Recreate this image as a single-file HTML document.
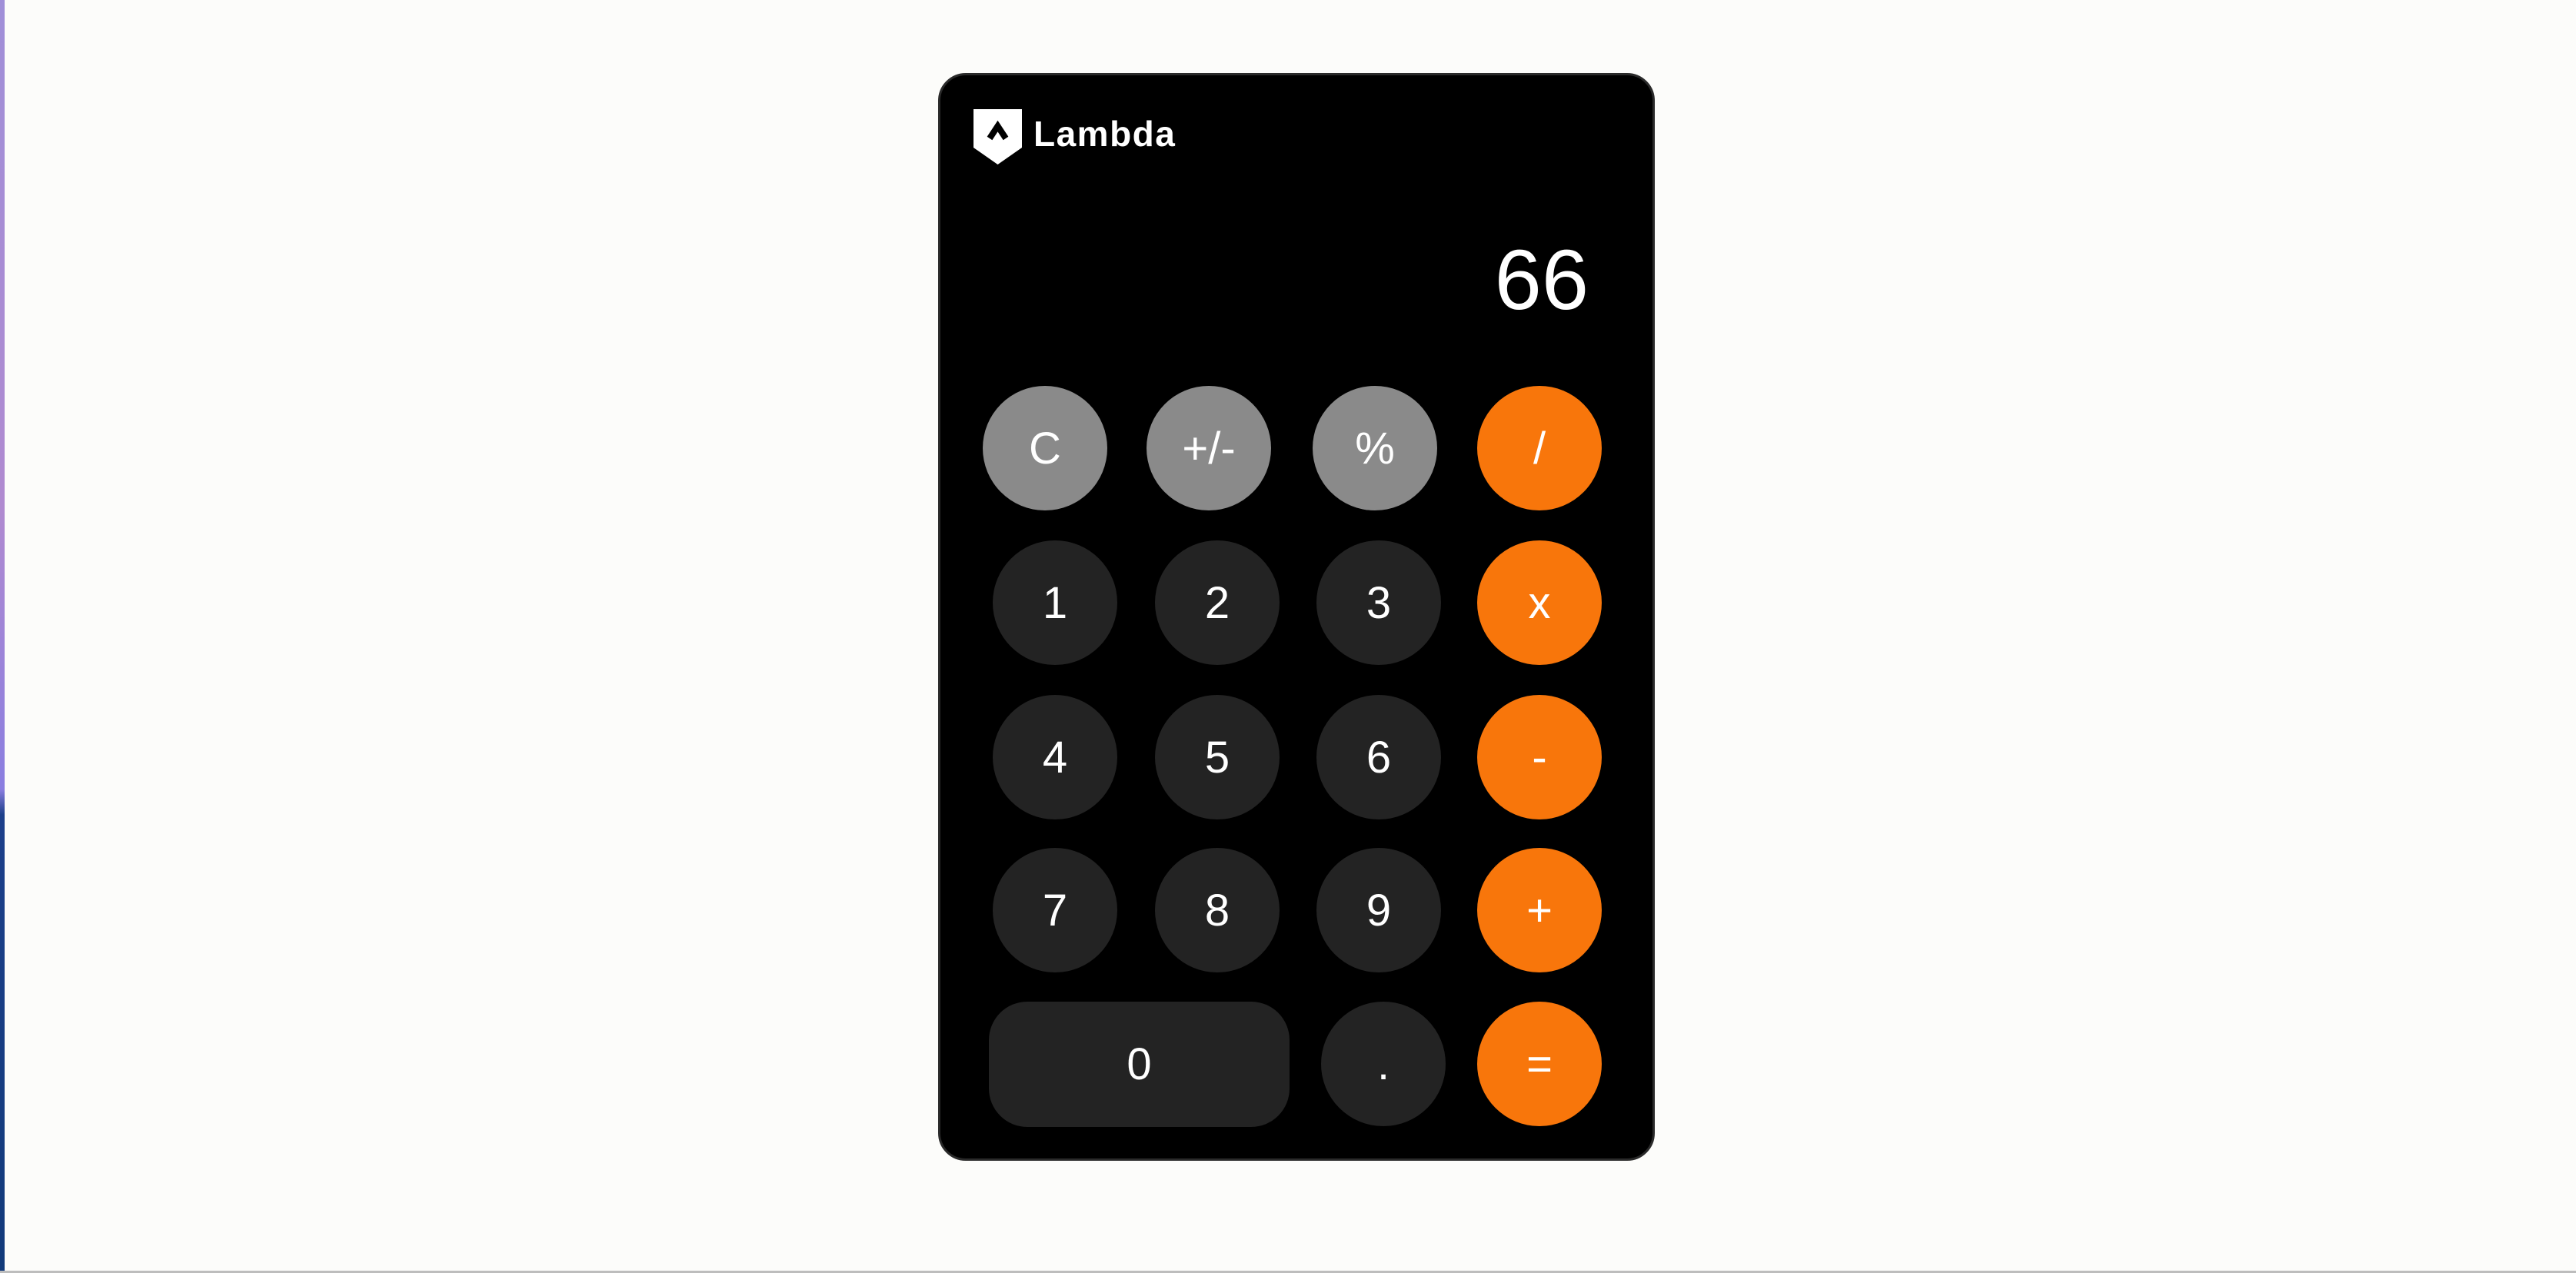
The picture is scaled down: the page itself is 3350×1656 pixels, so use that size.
<!DOCTYPE html>
<html><head><style>
html,body{margin:0;padding:0}
body{width:3350px;height:1656px;background:#fcfcfa;position:relative;overflow:hidden;font-family:"Liberation Sans",Arial,sans-serif}
.strip{position:absolute;left:0;top:0;width:6px;height:1656px;background:linear-gradient(#a08fd8 0,#b08ad0 40%,#8a7ee0 62%,#1c3f8a 64%,#123a7a 100%)}
.bot{position:absolute;left:0;bottom:0;width:3350px;height:3px;background:#bdbdbd}
.card{position:absolute;left:1220px;top:95px;width:926px;height:1409px;background:#000;border:3px solid #2a2a2a;border-radius:36px}
.b{position:absolute;width:162px;height:162px;border-radius:50%;background:#232323;color:#fff;font-size:58px;display:flex;align-items:center;justify-content:center}
.g{background:#8a8a8a}
.o{background:#f8760b}
</style></head><body>
<div class="strip"></div>
<div class="bot"></div>
<div class="card"></div>
<svg style="position:absolute;left:1266px;top:142px" width="64" height="72" viewBox="0 0 64 72"><path d="M0 0H63V50L31.5 72L0 50Z" fill="#fff"/><path d="M21 38L31.5 22L42 38" stroke="#000" stroke-width="8" fill="none"/></svg>
<div style="position:absolute;left:1344px;top:144px;font-size:46px;font-weight:bold;color:#fff;line-height:60px;letter-spacing:1.5px">Lambda</div>
<div style="position:absolute;right:1284px;top:305px;font-size:110px;color:#fff;line-height:120px">66</div>

<div class="b g" style="left:1278px;top:502px">C</div>
<div class="b g" style="left:1491px;top:502px">+/-</div>
<div class="b g" style="left:1707px;top:502px">%</div>
<div class="b o" style="left:1921px;top:502px">/</div>

<div class="b" style="left:1291px;top:703px">1</div>
<div class="b" style="left:1502px;top:703px">2</div>
<div class="b" style="left:1712px;top:703px">3</div>
<div class="b o" style="left:1921px;top:703px">x</div>

<div class="b" style="left:1291px;top:904px">4</div>
<div class="b" style="left:1502px;top:904px">5</div>
<div class="b" style="left:1712px;top:904px">6</div>
<div class="b o" style="left:1921px;top:904px">-</div>

<div class="b" style="left:1291px;top:1103px">7</div>
<div class="b" style="left:1502px;top:1103px">8</div>
<div class="b" style="left:1712px;top:1103px">9</div>
<div class="b o" style="left:1921px;top:1103px">+</div>

<div class="b" style="left:1286px;top:1303px;width:391px;height:163px;border-radius:50px">0</div>
<div class="b" style="left:1718px;top:1303px">.</div>
<div class="b o" style="left:1921px;top:1303px">=</div>
</body></html>
